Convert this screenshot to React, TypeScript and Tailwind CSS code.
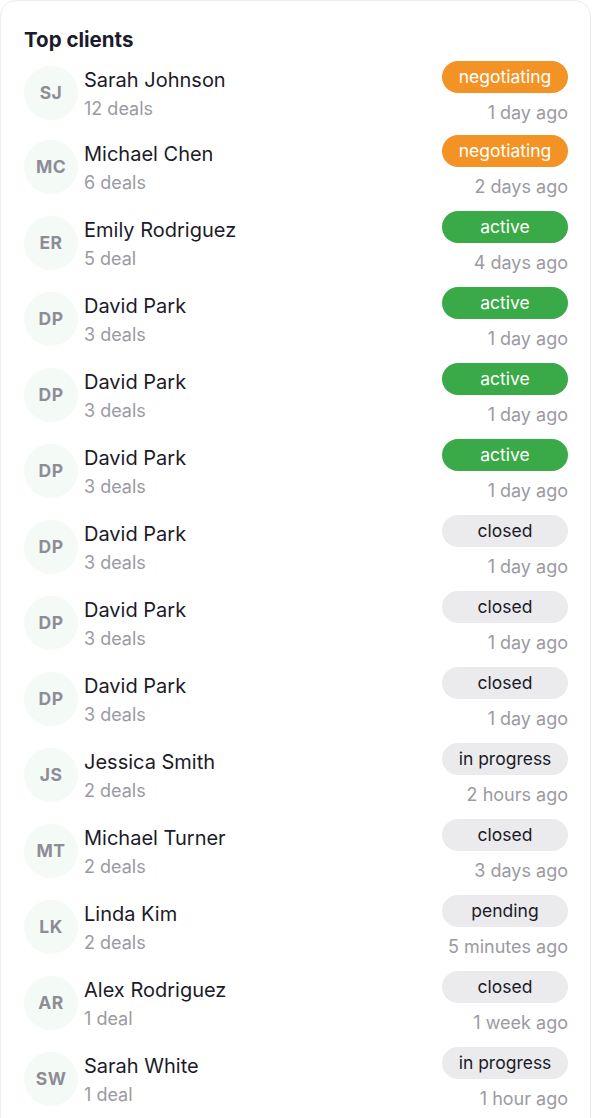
const clients = [
  { initials: "SJ", name: "Sarah Johnson", deals: "12 deals", status: "negotiating", time: "1 day ago" },
  { initials: "MC", name: "Michael Chen", deals: "6 deals", status: "negotiating", time: "2 days ago" },
  { initials: "ER", name: "Emily Rodriguez", deals: "5 deal", status: "active", time: "4 days ago" },
  { initials: "DP", name: "David Park", deals: "3 deals", status: "active", time: "1 day ago" },
  { initials: "DP", name: "David Park", deals: "3 deals", status: "active", time: "1 day ago" },
  { initials: "DP", name: "David Park", deals: "3 deals", status: "active", time: "1 day ago" },
  { initials: "DP", name: "David Park", deals: "3 deals", status: "closed", time: "1 day ago" },
  { initials: "DP", name: "David Park", deals: "3 deals", status: "closed", time: "1 day ago" },
  { initials: "DP", name: "David Park", deals: "3 deals", status: "closed", time: "1 day ago" },
  { initials: "JS", name: "Jessica Smith", deals: "2 deals", status: "in progress", time: "2 hours ago" },
  { initials: "MT", name: "Michael Turner", deals: "2 deals", status: "closed", time: "3 days ago" },
  { initials: "LK", name: "Linda Kim", deals: "2 deals", status: "pending", time: "5 minutes ago" },
  { initials: "AR", name: "Alex Rodriguez", deals: "1 deal", status: "closed", time: "1 week ago" },
  { initials: "SW", name: "Sarah White", deals: "1 deal", status: "in progress", time: "1 hour ago" },
];

const badgeStyles: Record<string, string> = {
  negotiating: "bg-[#f39325] text-white",
  active: "bg-[#3aaa48] text-white",
  closed: "bg-[#ebebed] text-[#1c1b29]",
  "in progress": "bg-[#ebebed] text-[#1c1b29]",
  pending: "bg-[#ebebed] text-[#1c1b29]",
};

const App = () => {
  return (
    <div className="w-[592px] h-[1118px] bg-white overflow-hidden font-['Inter',sans-serif]">
      <div className="w-[591px] min-h-[1140px] border border-[#ececef] rounded-2xl pl-6 pr-[22px] pt-[27px]">
        <h2 className="text-[20.5px] leading-6 font-bold text-[#1c1b29] -ml-px">Top clients</h2>

        <ul className="flex flex-col gap-3 mt-[9px]">
          {clients.map((c, index) => (
            <li key={index} className="flex items-center justify-between first:-mb-[2px]">
              <div className="flex items-center gap-[6px]">
                <div className="w-[54px] h-[54px] -ml-px rounded-full bg-[#f4faf6] bg-[radial-gradient(#eaf5ed_0.7px,transparent_0.7px)] bg-[length:4px_4px] flex items-center justify-center">
                  <span className="text-[17.5px] font-bold text-[#8e8d96] tracking-[0.5px]">{c.initials}</span>
                </div>
                <div className="flex flex-col">
                  <span className="text-[20px] leading-[26px] mt-[1px] text-[#1c1b29]">{c.name}</span>
                  <span className="text-[18px] leading-6 mt-[4px] text-[#9b9aa2]">{c.deals}</span>
                </div>
              </div>

              <div className="flex flex-col items-end">
                <span
                  className={`w-[126px] h-8 rounded-full flex items-center justify-center text-[17.5px] ${badgeStyles[c.status]}`}
                >
                  {c.status}
                </span>
                <span className="text-[18px] leading-6 mt-2 text-[#9b9aa2]">{c.time}</span>
              </div>
            </li>
          ))}
        </ul>
      </div>
    </div>
  );
};

export default App;
